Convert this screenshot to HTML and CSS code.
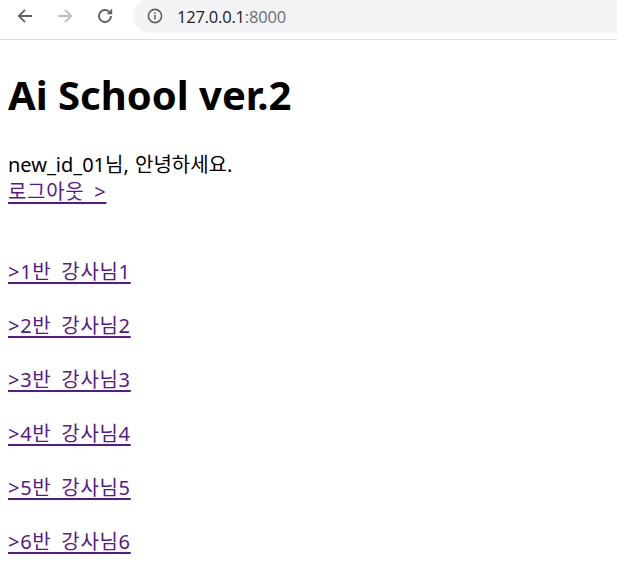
FILE: index.html
```html
<!DOCTYPE html>
<html lang="ko">
<head>
<meta charset="utf-8">
<title>Ai School ver.2</title>
<link rel="stylesheet" href="styles.css">
</head>
<body>
<header class="toolbar">
  <div class="nav">
    <span class="btn">
      <svg width="20" height="20" viewBox="0 0 20 20"><path d="M17 10H4.5M10 3.8L3.8 10l6.2 6.2" fill="none" stroke="#5f6368" stroke-width="1.9"/></svg>
    </span>
    <span class="btn">
      <svg width="20" height="20" viewBox="0 0 20 20"><path d="M3 10h12.5M10 3.8l6.2 6.2-6.2 6.2" fill="none" stroke="#bdc1c6" stroke-width="1.9"/></svg>
    </span>
    <span class="btn">
      <svg width="20" height="20" viewBox="0 0 20 20"><path d="M16 10a6 6 0 1 1-1.8-4.3" fill="none" stroke="#5f6368" stroke-width="1.9"/><path d="M17.2 2.6v5.6h-5.6z" fill="#5f6368"/></svg>
    </span>
  </div>
  <div class="omnibox">
    <svg class="info" width="16" height="16" viewBox="0 0 16 16"><circle cx="8" cy="8" r="6.6" fill="none" stroke="#5f6368" stroke-width="1.6"/><rect x="7.2" y="7" width="1.6" height="4.4" fill="#5f6368"/><rect x="7.2" y="4.4" width="1.6" height="1.6" fill="#5f6368"/></svg>
    <span class="url"><span class="host">127.0.0.1</span><span class="port">:8000</span></span>
  </div>
</header>
<main class="content">
  <h1 class="title">Ai School ver.2</h1>
  <div class="user">
    <div class="line">new_id_01님, 안녕하세요.</div>
    <div class="line"><a class="link" href="#">로그아웃 &gt;</a></div>
  </div>
  <ul class="teachers">
    <li><a class="link" href="#">&gt;1반 강사님1</a></li>
    <li><a class="link" href="#">&gt;2반 강사님2</a></li>
    <li><a class="link" href="#">&gt;3반 강사님3</a></li>
    <li><a class="link" href="#">&gt;4반 강사님4</a></li>
    <li><a class="link" href="#">&gt;5반 강사님5</a></li>
    <li><a class="link" href="#">&gt;6반 강사님6</a></li>
  </ul>
</main>
</body>
</html>
```
FILE: styles.css
```css
html, body {
  margin: 0;
  padding: 0;
  background: #fff;
}
body {
  font-family: "Noto Sans", "Noto Sans CJK KR", sans-serif;
  color: #000;
  overflow: hidden;
}
.toolbar {
  height: 39px;
  border-bottom: 1px solid #dadce0;
  display: flex;
  align-items: flex-start;
}
.nav {
  display: flex;
  padding-left: 15px;
  gap: 20px;
  padding-top: 6px;
}
.btn {
  width: 20px;
  height: 20px;
  display: flex;
}
.omnibox {
  margin-left: 18px;
  margin-top: -1px;
  flex: 1;
  height: 34px;
  background: #f1f3f4;
  border-radius: 17px 0 0 17px;
  display: flex;
  align-items: center;
  padding-left: 14px;
}
.info {
  display: block;
}
.url {
  margin-left: 14px;
  font-family: "Open Sans", sans-serif;
  font-size: 16.5px;
  letter-spacing: -0.2px;
}
.host { color: #202124; }
.port { color: #6b7075; }
.content {
  padding: 0 8px;
}
.title {
  font-size: 40px;
  font-weight: bold;
  margin: 27px 0 0;
  line-height: 56px;
}
.user {
  margin-top: 28px;
  font-size: 20px;
  line-height: 27px;
  word-spacing: 1px;
}
.link {
  color: #551a8b;
  text-decoration: underline;
  text-decoration-thickness: 2px;
  text-underline-offset: 3px;
  word-spacing: 4px;
  letter-spacing: 0.7px;
}
.teachers {
  list-style: none;
  margin: 53px 0 0;
  padding: 0;
  font-size: 20px;
  line-height: 27px;
}
.teachers li {
  margin-bottom: 27px;
}
```
